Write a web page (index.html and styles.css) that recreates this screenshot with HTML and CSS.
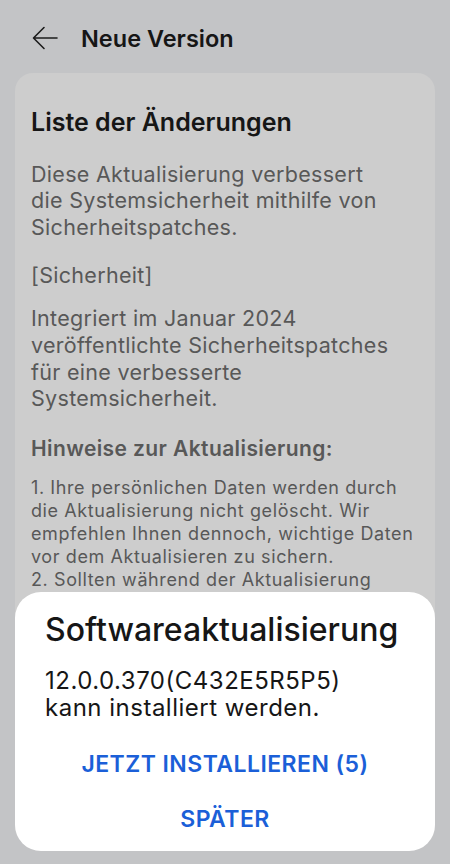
FILE: index.html
```html
<!DOCTYPE html>
<html lang="de">
<head>
<meta charset="utf-8">
<link rel="stylesheet" href="styles.css">
</head>
<body>
<div class="screen">
  <header class="topbar">
    <svg class="back" width="26" height="24" viewBox="0 0 26 24" aria-hidden="true">
      <path d="M25 12H2M12 1.5L1.5 12L12 22.5" fill="none" stroke="#1c1c1c" stroke-width="1.6" stroke-linecap="round" stroke-linejoin="round"/>
    </svg>
    <h1 class="title">Neue Version</h1>
  </header>
  <main class="card">
    <h2 class="card-title">Liste der Änderungen</h2>
    <p class="body p1">Diese Aktualisierung verbessert<br>die Systemsicherheit mithilfe von<br>Sicherheitspatches.</p>
    <p class="body p2">[Sicherheit]</p>
    <p class="body p3">Integriert im Januar 2024<br>veröffentlichte Sicherheitspatches<br>für eine verbesserte<br>Systemsicherheit.</p>
    <h3 class="notes-title">Hinweise zur Aktualisierung:</h3>
    <p class="notes">1. Ihre persönlichen Daten werden durch<br>die Aktualisierung nicht gelöscht. Wir<br>empfehlen Ihnen dennoch, wichtige Daten<br>vor dem Aktualisieren zu sichern.<br>2. Sollten während der Aktualisierung</p>
  </main>
  <div class="dialog">
    <h2 class="dialog-title">Softwareaktualisierung</h2>
    <p class="dialog-text">12.0.0.370(C432E5R5P5)<br>kann installiert werden.</p>
    <div class="actions">
      <button class="action">JETZT INSTALLIEREN (5)</button>
      <button class="action">SPÄTER</button>
    </div>
  </div>
</div>
</body>
</html>
```
FILE: styles.css
```css
* { box-sizing: border-box; }
html, body { margin: 0; padding: 0; }
body {
  width: 450px;
  height: 864px;
  overflow: hidden;
  background: #c3c4c6;
  font-family: Inter, Roboto, sans-serif;
}
.screen {
  position: relative;
  height: 864px;
  overflow: hidden;
  padding: 0 15px;
}
.topbar {
  display: flex;
  align-items: center;
  height: 73px;
  padding: 4px 0 0 17px;
}
.back { flex: none; margin-top: -2px; }
.title {
  margin: 0 0 0 23px;
  font-size: 23.5px;
  font-weight: 600;
  line-height: 30px;
  color: #161616;
}
.card {
  background: #cdcdcd;
  border-radius: 18px;
  padding: 34px 16px 0;
  height: 772px;
  overflow: hidden;
}
.card-title {
  margin: 0;
  font-size: 25px;
  font-weight: 600;
  line-height: 30px;
  color: #161616;
}
.body {
  margin: 0;
  font-size: 21.5px;
  letter-spacing: 0.3px;
  line-height: 26.7px;
  color: #585858;
}
.p1 { margin-top: 23.5px; }
.p2 { margin-top: 21px; }
.p3 { margin-top: 17px; }
.notes-title {
  margin: 23px 0 0;
  font-size: 21px;
  font-weight: 600;
  letter-spacing: 0.4px;
  line-height: 27px;
  color: #585858;
}
.notes {
  margin: 13.5px 0 0;
  font-size: 18px;
  letter-spacing: 0.6px;
  line-height: 23px;
  color: #585858;
}
.dialog {
  position: absolute;
  left: 15px;
  right: 15px;
  top: 592px;
  height: 259px;
  background: #ffffff;
  border-radius: 26px;
  padding: 18px 30px 0;
}
.dialog-title {
  margin: 0;
  font-size: 32px;
  font-weight: 500;
  line-height: 40px;
  color: #161616;
}
.dialog-text {
  margin: 17px 0 0;
  font-size: 24px;
  letter-spacing: 0.5px;
  line-height: 27px;
  color: #161616;
}
.actions {
  display: flex;
  flex-direction: column;
  align-items: center;
  margin-top: 23px;
  gap: 15px;
}
.action {
  border: 0;
  background: none;
  padding: 0;
  font-family: inherit;
  font-size: 23px;
  font-weight: 600;
  letter-spacing: 0.45px;
  line-height: 40px;
  color: #1b5fd8;
}
```
